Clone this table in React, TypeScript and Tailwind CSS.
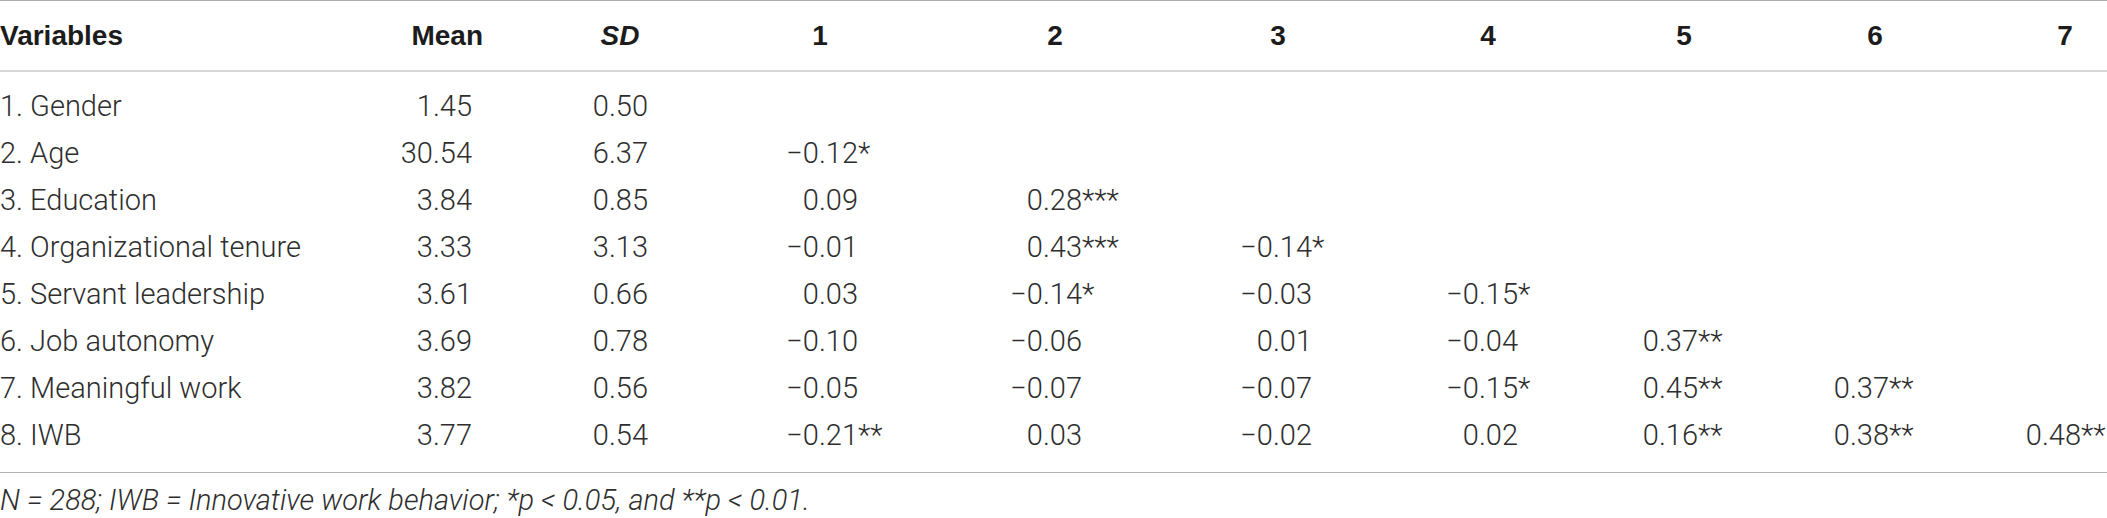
import React from 'react';

type Cell = [string, string];

interface Row {
  label: string;
  mean: string;
  sd: string;
  r: Cell[];
}

const rows: Row[] = [
  { label: '1. Gender', mean: '1.45', sd: '0.50', r: [] },
  { label: '2. Age', mean: '30.54', sd: '6.37', r: [['−0.12', '*']] },
  { label: '3. Education', mean: '3.84', sd: '0.85', r: [['0.09', ''], ['0.28', '***']] },
  { label: '4. Organizational tenure', mean: '3.33', sd: '3.13', r: [['−0.01', ''], ['0.43', '***'], ['−0.14', '*']] },
  { label: '5. Servant leadership', mean: '3.61', sd: '0.66', r: [['0.03', ''], ['−0.14', '*'], ['−0.03', ''], ['−0.15', '*']] },
  { label: '6. Job autonomy', mean: '3.69', sd: '0.78', r: [['−0.10', ''], ['−0.06', ''], ['0.01', ''], ['−0.04', ''], ['0.37', '**']] },
  { label: '7. Meaningful work', mean: '3.82', sd: '0.56', r: [['−0.05', ''], ['−0.07', ''], ['−0.07', ''], ['−0.15', '*'], ['0.45', '**'], ['0.37', '**']] },
  { label: '8. IWB', mean: '3.77', sd: '0.54', r: [['−0.21', '**'], ['0.03', ''], ['−0.02', ''], ['0.02', ''], ['0.16', '**'], ['0.38', '**'], ['0.48', '**']] },
];

// correlation columns: cell width, header offset, width of the right-aligned number box
const cols = [
  { w: 'w-[230px]', head: 'pr-[30px]', num: 'w-[138px]' },
  { w: 'w-[230px]', head: 'pr-[20px]', num: 'w-[132px]' },
  { w: 'w-[220px]', head: 'pr-[24px]', num: 'w-[132px]' },
  { w: 'w-[190px]', head: 'pr-[14px]', num: 'w-[118px]' },
  { w: 'w-[200px]', head: 'pr-[12px]', num: 'w-[108px]' },
  { w: 'w-[190px]', head: 'pr-[20px]', num: 'w-[99px]' },
  { w: 'w-[127px]', head: 'pl-[43px]', num: 'w-[101px]' },
];

const App: React.FC = () => {
  return (
    <div className="w-[2107px] h-[518px] bg-white font-['Roboto','Liberation_Sans',sans-serif] font-light text-[29px] leading-[31px] text-[#2e2e2e] overflow-hidden">
      {/* Header */}
      <div className="flex items-center h-[72px] border-t border-[#adadad] border-b-2 border-b-[#d8d8d8] font-['Liberation_Sans',Arial,sans-serif] font-bold text-[28px] text-[#1c1c1c]">
        <div className="w-[380px] shrink-0">Variables</div>
        <div className="w-[140px] shrink-0 text-right pr-[37px]">Mean</div>
        <div className="w-[200px] shrink-0 text-center italic">SD</div>
        {cols.map((c, i) => (
          <div key={i} className={`${c.w} ${c.head} shrink-0 text-center`}>
            {i + 1}
          </div>
        ))}
      </div>

      {/* Body */}
      <div className="pt-[11px] pb-[13px] border-b border-[#b3b3b3]">
        {rows.map(row => (
          <div key={row.label} className="flex items-center h-[47px]">
            <div className="w-[380px] shrink-0 whitespace-nowrap">{row.label}</div>
            <div className="w-[140px] shrink-0 text-right pr-[48px]">{row.mean}</div>
            <div className="w-[200px] shrink-0 flex">
              <span className="w-[128px] text-right">{row.sd}</span>
            </div>
            {cols.map((c, i) => {
              const cell = row.r[i];
              return (
                <div key={i} className={`${c.w} shrink-0 flex whitespace-nowrap`}>
                  {cell && (
                    <>
                      <span className={`${c.num} shrink-0 text-right`}>{cell[0]}</span>
                      <span>{cell[1]}</span>
                    </>
                  )}
                </div>
              );
            })}
          </div>
        ))}
      </div>

      {/* Note */}
      <div className="pt-[12px] italic whitespace-nowrap">
        N = 288; IWB = Innovative work behavior; *p &lt; 0.05, and **p &lt; 0.01.
      </div>
    </div>
  );
};

export default App;
